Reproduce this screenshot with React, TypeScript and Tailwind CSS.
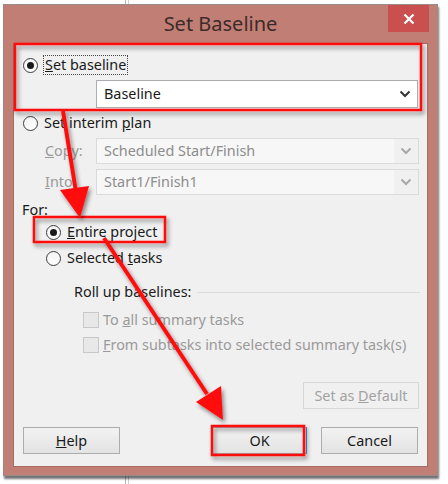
import React from 'react';

const font = { fontFamily: '"Noto Sans", "Open Sans", sans-serif' };

const Radio = ({ checked }: { checked?: boolean }) => (
  <span className="flex h-[15px] w-[15px] shrink-0 items-center justify-center rounded-full border border-[#3c3c3c] bg-gradient-to-b from-[#f4f4f4] to-white">
    {checked && <span className="h-[7px] w-[7px] rounded-full bg-[#1a1a1a]" />}
  </span>
);

const Chevron = ({ color }: { color: string }) => (
  <svg width="12" height="8" viewBox="0 0 12 8" className="shrink-0">
    <path d="M1.5 1.5 L6 6 L10.5 1.5" fill="none" stroke={color} strokeWidth="2" />
  </svg>
);

const Select = ({ value, disabled }: { value: string; disabled?: boolean }) => (
  <div
    className={
      disabled
        ? 'flex h-full w-[323px] items-center border border-[#dadada] bg-[#f7f7f7]'
        : 'flex h-full w-[322px] items-center border border-[#abadb3] bg-white'
    }
  >
    <span className={disabled ? 'flex-1 pl-[7px] text-[#8d8d8d]' : 'flex-1 pl-[7px] text-[#1a1a1a]'}>{value}</span>
    <span className={disabled ? 'flex h-full w-[24px] items-center justify-center bg-[#f0f0f0]' : 'flex h-full w-[24px] items-center justify-center'}>
      <Chevron color={disabled ? '#a8a8a8' : '#333'} />
    </span>
  </div>
);

const Button = ({ children, disabled, className = '' }: { children: React.ReactNode; disabled?: boolean; className?: string }) => (
  <div
    className={
      (disabled
        ? 'border-[#d7d7d7] bg-[#f0f0f0] text-[#a2a2a2] '
        : 'border-[#acacac] bg-gradient-to-b from-[#f2f2f2] to-[#e3e3e3] text-[#1a1a1a] ') +
      'flex h-[27px] items-center justify-center border ' +
      className
    }
  >
    <span>{children}</span>
  </div>
);

export default function App() {
  return (
    <div className="relative h-[484px] w-[448px] overflow-hidden bg-white text-[14.4px]" style={font}>
      {/* sheet lines behind the dialog */}
      <div className="absolute left-[125px] top-0 h-full w-px bg-[#b8b8b8]" />
      <div className="absolute left-[128px] top-0 h-full w-px bg-[#d0d0d0]" />

      <div className="relative ml-[3px] mt-[4px] flex h-[472px] w-[435px] flex-col border border-[#9c8a88] bg-[#c17e74] shadow-[1px_3px_2px_rgba(0,0,0,0.55)]">
        {/* title bar */}
        <div className="relative flex h-[38px] shrink-0 items-center justify-center">
          <span className="text-[20px] text-[#3b2b29]">Set Baseline</span>
          <div className="absolute right-[8px] top-0 flex h-[27px] w-[41px] items-center justify-center bg-[#c9504e]">
            <svg width="12" height="12" viewBox="0 0 12 12">
              <path d="M1.5 1.5 L10.5 10.5 M10.5 1.5 L1.5 10.5" stroke="white" strokeWidth="2.2" />
            </svg>
          </div>
        </div>

        {/* client area */}
        <div className="mx-[9px] flex h-[424px] flex-col border border-[#a46c64] bg-[#f0f0f0] pt-[11px] text-[#1a1a1a]">
          <div className="flex h-[20px] items-center pl-[9px]">
            <Radio checked />
            <span className="ml-[5px] border border-dotted border-[#444] px-px leading-[18px]">
              <u>S</u>et baseline
            </span>
          </div>
          <div className="ml-[82px] mt-[5px] h-[28px]">
            <Select value="Baseline" />
          </div>

          <div className="mt-[5px] flex h-[20px] items-center pl-[9px]">
            <Radio />
            <span className="ml-[6px]">
              Set interim <u>p</u>lan
            </span>
          </div>
          <div className="mt-[5px] flex h-[26px] items-center">
            <span className="w-[82px] pl-[31px] text-[#9a9a9a]">
              <u>C</u>opy:
            </span>
            <Select value="Scheduled Start/Finish" disabled />
          </div>
          <div className="mt-[5px] flex h-[26px] items-center">
            <span className="w-[82px] pl-[31px] text-[#9a9a9a]">
              <u>I</u>nto:
            </span>
            <Select value="Start1/Finish1" disabled />
          </div>

          <div className="mt-[5px] flex h-[20px] items-center pl-[8px]">For:</div>
          <div className="mt-[2px] flex h-[20px] items-center pl-[32px]">
            <Radio checked />
            <span className="ml-[6px]">
              <u>E</u>ntire project
            </span>
          </div>
          <div className="mt-[6px] flex h-[20px] items-center pl-[32px]">
            <Radio />
            <span className="ml-[6px]">
              Selected <u>t</u>asks
            </span>
          </div>

          <div className="mt-[14px] flex h-[20px] items-center pl-[60px] pr-[7px]">
            <span>Roll up baselines:</span>
            <span className="ml-[6px] h-px flex-1 bg-[#dcdcdc]" />
          </div>
          <div className="mt-[10px] flex h-[16px] items-center pl-[69px] text-[#9a9a9a]">
            <span className="h-[16px] w-[16px] border border-[#c8c8c8] bg-[#e8e8e8]" />
            <span className="ml-[4px]">
              To <u>a</u>ll summary tasks
            </span>
          </div>
          <div className="mt-[9px] flex h-[16px] items-center pl-[69px] text-[#9a9a9a]">
            <span className="h-[16px] w-[16px] border border-[#c8c8c8] bg-[#e8e8e8]" />
            <span className="ml-[4px]">
              <u>F</u>rom subtasks into selected summary task(s)
            </span>
          </div>

          <div className="mt-[29px] flex justify-end pr-[8px]">
            <Button disabled className="w-[116px]">
              Set as <u>D</u>efault
            </Button>
          </div>

          <div className="mt-[18px] flex items-center pl-[9px] pr-[8px]">
            <Button className="w-[97px]">
              <u>H</u>elp
            </Button>
            <Button className="ml-[92px] w-[95px] border-l-[#3d8ee8] border-r-[#3d8ee8]">OK</Button>
            <Button className="ml-[14px] w-[97px]">Cancel</Button>
          </div>
        </div>
      </div>

      {/* annotations */}
      <svg className="pointer-events-none absolute left-0 top-0" width="448" height="484" viewBox="0 0 448 484">
        <defs>
          <filter id="sh" x="-20%" y="-20%" width="140%" height="140%">
            <feDropShadow dx="2" dy="3" stdDeviation="2" floodColor="#000" floodOpacity="0.45" />
          </filter>
        </defs>
        <g filter="url(#sh)" fill="none" stroke="#ff1010">
          <rect x="15" y="44" width="406" height="66" strokeWidth="2.5" />
          <rect x="34" y="217" width="131" height="25" strokeWidth="2.5" />
          <rect x="212" y="426" width="92" height="29" strokeWidth="2.5" />
        </g>
        <g filter="url(#sh)" fill="#ff1010">
          <path d="M63 111 L76 192" stroke="#ff1010" strokeWidth="4" />
          <polygon points="80,218 60,190 89,186" />
          <path d="M104 238 L207 394" stroke="#ff1010" strokeWidth="4" />
          <polygon points="223,420 196,402 221,386" />
        </g>
      </svg>
    </div>
  );
}
